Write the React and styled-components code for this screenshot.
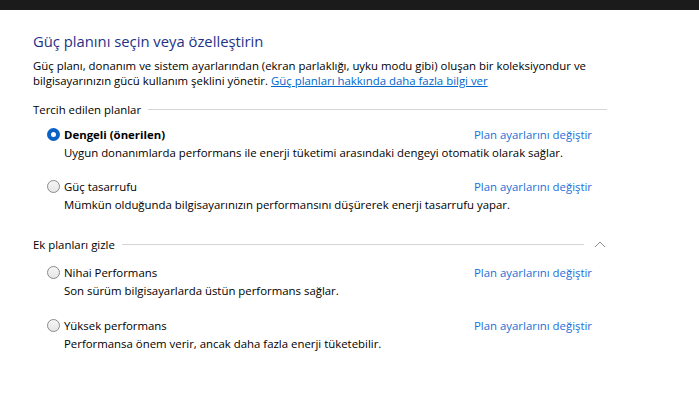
import React from "react";
import styled, { createGlobalStyle } from "styled-components";

const Global = createGlobalStyle`
  html, body { margin: 0; padding: 0; background: #ffffff; }
  body { font-family: "Open Sans", "Noto Sans", sans-serif; color: #000; }
`;

const TopBar = styled.div`
  height: 10px;
  background: #1b1b1b;
`;

const Content = styled.main`
  padding: 20px 92px 0 33px;
  display: flex;
  flex-direction: column;
`;

const Title = styled.h1`
  margin: 0;
  font-size: 14.8px;
  font-weight: 400;
  line-height: 22px;
  color: #1e3287;
`;

const Intro = styled.p`
  margin: 6px 0 0;
  font-size: 11.4px;
  line-height: 15px;
`;

const Link = styled.a`
  color: #0066cc;
  text-decoration: ${(p) => (p.$underline ? "underline" : "none")};
  cursor: pointer;
`;

const SectionHeader = styled.div`
  display: flex;
  align-items: center;
  gap: 7px;
  height: 20px;
  margin-top: ${(p) => p.$mt}px;
  font-size: 11.4px;
`;

const Rule = styled.div`
  flex: 1;
  height: 1px;
  background: #d4d4d4;
`;

const Chevron = styled.span`
  display: flex;
  width: 14px;
  margin-left: 2px;
  justify-content: center;
`;

const Plan = styled.div`
  display: grid;
  grid-template-columns: 427px auto;
  grid-template-rows: 22px 16px;
  margin-left: 14px;
  margin-top: ${(p) => p.$mt}px;
  font-size: 11.4px;
`;

const Choice = styled.label`
  display: flex;
  align-items: center;
  gap: 4px;
  font-weight: ${(p) => (p.$bold ? 700 : 400)};
`;

const Radio = styled.span`
  box-sizing: border-box;
  width: 13px;
  height: 13px;
  border-radius: 50%;
  flex: none;
  ${(p) =>
    p.$checked
      ? `background: #ffffff; border: 4px solid #0a62c4;`
      : `background: linear-gradient(#f6f6f6, #e6e6e6); border: 1px solid #8a8a8a;`}
`;

const PlanLink = styled(Link)`
  align-self: center;
  color: #1a6fd8;
`;

const Desc = styled.div`
  grid-column: 1 / 3;
  padding-left: 17px;
  line-height: 16px;
`;

const plansA = [
  { name: "Dengeli (önerilen)", desc: "Uygun donanımlarda performans ile enerji tüketimi arasındaki dengeyi otomatik olarak sağlar.", checked: true },
  { name: "Güç tasarrufu", desc: "Mümkün olduğunda bilgisayarınızın performansını düşürerek enerji tasarrufu yapar." },
];
const plansB = [
  { name: "Nihai Performans", desc: "Son sürüm bilgisayarlarda üstün performans sağlar." },
  { name: "Yüksek performans", desc: "Performansa önem verir, ancak daha fazla enerji tüketebilir." },
];

function PlanItem({ plan, mt }) {
  return (
    <Plan $mt={mt}>
      <Choice $bold={plan.checked}>
        <Radio $checked={plan.checked} />
        {plan.name}
      </Choice>
      <PlanLink>Plan ayarlarını değiştir</PlanLink>
      <Desc>{plan.desc}</Desc>
    </Plan>
  );
}

export default function App() {
  return (
    <>
      <Global />
      <TopBar />
      <Content>
        <Title>Güç planını seçin veya özelleştirin</Title>
        <Intro>
          Güç planı, donanım ve sistem ayarlarından (ekran parlaklığı, uyku modu gibi) oluşan bir koleksiyondur ve
          <br />
          bilgisayarınızın gücü kullanım şeklini yönetir.{" "}
          <Link $underline>Güç planları hakkında daha fazla bilgi ver</Link>
        </Intro>
        <SectionHeader $mt={11}>
          Tercih edilen planlar
          <Rule />
        </SectionHeader>
        <PlanItem plan={plansA[0]} mt={4} />
        <PlanItem plan={plansA[1]} mt={14} />
        <SectionHeader $mt={21}>
          Ek planları gizle
          <Rule />
          <Chevron>
            <svg width="12" height="7" viewBox="0 0 12 7">
              <path d="M1 6 L6 1 L11 6" fill="none" stroke="#8a8a8a" strokeWidth="1" />
            </svg>
          </Chevron>
        </SectionHeader>
        <PlanItem plan={plansB[0]} mt={7} />
        <PlanItem plan={plansB[1]} mt={15} />
      </Content>
    </>
  );
}
